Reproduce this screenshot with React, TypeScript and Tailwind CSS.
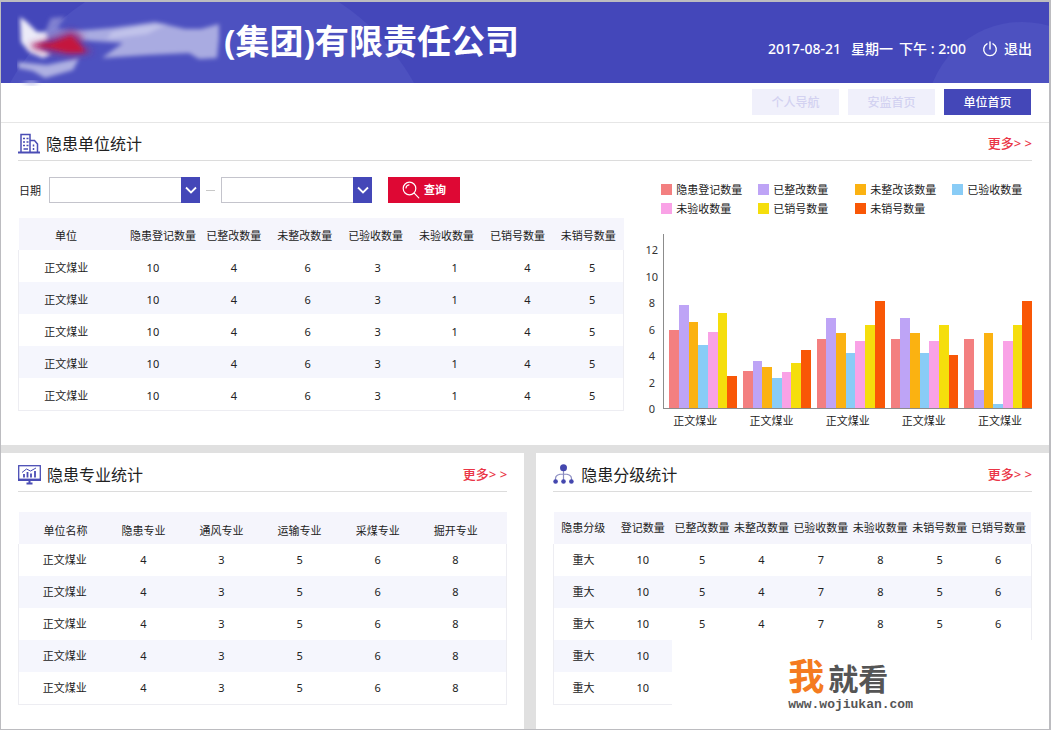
import type { ReactNode } from "react"

const series = [
    { name: "隐患登记数量", color: "bg-[#f37f80]" },
    { name: "已整改数量", color: "bg-[#bea4f6]" },
    { name: "未整改该数量", color: "bg-[#fbb211]" },
    { name: "已验收数量", color: "bg-[#89ccf6]" },
    { name: "未验收数量", color: "bg-[#f9a2e6]" },
    { name: "已销号数量", color: "bg-[#f5de0c]" },
    { name: "未销号数量", color: "bg-[#f95706]" }
]

const chartMax = 13.2

const chartGroups = [
    { name: "正文煤业", values: [5.9, 7.8, 6.5, 4.8, 5.8, 7.2, 2.4] },
    { name: "正文煤业", values: [2.8, 3.6, 3.1, 2.3, 2.7, 3.4, 4.4] },
    { name: "正文煤业", values: [5.2, 6.8, 5.7, 4.2, 5.1, 6.3, 8.1] },
    { name: "正文煤业", values: [5.2, 6.8, 5.7, 4.2, 5.1, 6.3, 4] },
    { name: "正文煤业", values: [5.2, 1.4, 5.7, 0.3, 5.1, 6.3, 8.1] }
]

type Column = { label: string; col?: string; head?: string; cell?: string }

const unitColumns: Column[] = [
    { label: "单位", col: "w-[18%]", head: "pt-1 pr-3.5", cell: "pt-1 pr-3.5" },
    { label: "隐患登记数量", head: "pt-1", cell: "pt-1 pr-5" },
    { label: "已整改数量", head: "pt-1", cell: "pt-1" },
    { label: "未整改数量", head: "pt-1", cell: "pt-1 pl-1.5" },
    { label: "已验收数量", head: "pt-1", cell: "pt-1 pl-1" },
    { label: "未验收数量", head: "pt-1", cell: "pt-1 pl-4" },
    { label: "已销号数量", head: "pt-1", cell: "pt-1 pl-5" },
    { label: "未销号数量", head: "pt-1", cell: "pt-1 pl-2" }
]

const majorColumns: Column[] = [
    { label: "单位名称", col: "w-[18%]", head: "pt-1.5 pl-1.5", cell: "pl-1" },
    { label: "隐患专业", head: "pt-1.5 pr-1", cell: "pr-1" },
    { label: "通风专业", head: "pt-1.5 pr-1", cell: "pr-1" },
    { label: "运输专业", head: "pt-1.5 pr-1", cell: "pr-1" },
    { label: "采煤专业", head: "pt-1.5 pr-1", cell: "pr-1" },
    { label: "掘开专业", col: "w-[18%]", head: "pt-1.5 pr-3.5", cell: "pr-3.5" }
]

const levelColumns: Column[] = [
    { label: "隐患分级" },
    { label: "登记数量" },
    { label: "已整改数量" },
    { label: "未整改数量" },
    { label: "已验收数量" },
    { label: "未验收数量" },
    { label: "未销号数量" },
    { label: "已销号数量", col: "w-[13%]", head: "pr-1", cell: "pr-1" }
]

const unitRows = Array.from({ length: 5 }, () => ["正文煤业", "10", "4", "6", "3", "1", "4", "5"])
const majorRows = Array.from({ length: 5 }, () => ["正文煤业", "4", "3", "5", "6", "8"])
const levelRows = [
    ["重大", "10", "5", "4", "7", "8", "5", "6"],
    ["重大", "10", "5", "4", "7", "8", "5", "6"],
    ["重大", "10", "5", "4", "7", "8", "5", "6"],
    ["重大", "10"],
    ["重大", "10"]
]

function BuildingIcon() {
    return (
        <svg viewBox="0 0 22 21" className="w-[22px] h-[21px]" fill="none" stroke="#4a4db5">
            <path d="M0 19.5h22" strokeWidth="2" />
            <path d="M3 19V1.5h9V19" strokeWidth="1.5" />
            <path d="M12 7.5h4.500l3 3.500V19" strokeWidth="1.500" />
            <path d="M5 5.500h2M8.500 5.500h2M5 9h2M8.500 9h2M5 12.500h2M8.500 12.500h2" strokeWidth="1.400" />
            <path d="M5.500 16h4.500M15.500 11.500v2M15.500 15v2" strokeWidth="1.500" />
        </svg>
    )
}

function MonitorIcon() {
    return (
        <svg viewBox="0 0 23 20" className="w-[23px] h-5" fill="none" stroke="#4a4db5">
            <rect x="0.700" y="0.700" width="21.600" height="14.600" strokeWidth="1.300" />
            <path d="M0 14.800h23" strokeWidth="2.400" />
            <path d="M6 12.500V9M9.500 12.500V7M13 12.500V8.500M17 12.500V6" strokeWidth="1.800" />
            <path d="M4 7.500L8.500 4l4 2L18 3" strokeWidth="1" />
            <path d="M11.500 15v3M8.500 18.500h6" strokeWidth="2" />
        </svg>
    )
}

function TreeIcon() {
    return (
        <svg viewBox="0 0 22 21" className="w-[22px] h-[21px]" fill="none" stroke="#8a8cc0">
            <path d="M10.500 6v11M2.500 16v-1.500c0-3 3-4.500 8-4.500s8 1.500 8 4.500V16" strokeWidth="1.200" />
            <g fill="#4447ae" stroke="none">
                <circle cx="10.500" cy="3.800" r="3.500" />
                <circle cx="2.600" cy="17.500" r="2.300" />
                <circle cx="10.500" cy="17.500" r="2.300" />
                <circle cx="18.400" cy="17.500" r="2.300" />
            </g>
        </svg>
    )
}

function BrandMark() {
    return (
        <svg viewBox="0 0 207 86" className="w-[207px] h-[86px] shrink-0" aria-hidden="true">
            <defs>
                <filter id="soft" x="-20%" y="-20%" width="140%" height="140%">
                    <feGaussianBlur stdDeviation="2" />
                </filter>
                <filter id="softer" x="-30%" y="-60%" width="160%" height="220%">
                    <feGaussianBlur stdDeviation="3.500" />
                </filter>
            </defs>
            <g filter="url(#soft)">
                <path d="M50 29C85 28 110 24 138 20L168 27 184 27 202 22 202 36 200 56 182 57 172 51 130 53 85 56 96 48 106 41 62 38Z" fill="#b4b5e4" opacity=".9" />
                <path d="M95 30L125 24 150 22 130 32 90 37Z" fill="#c8c9ee" opacity=".8" />
                <path d="M3 15L10 20 20 30 30 30 32 38 22 44 34 52 26 56 12 50 4 40Z" fill="#ecebf8" />
                <path d="M28 30L34 16 48 15 40 26 60 30 66 36 30 38Z" fill="#8f8fd6" opacity=".8" />
                <path d="M1 60L30 63 62 56 56 68 28 76 16 69 1 66Z" fill="#aeb0e2" />
            </g>
            <path d="M4 81L14 79 24 81 15 83Z" fill="#b8baea" filter="url(#soft)" />
            <path d="M12 43L36 36 54 28 66 34 64 42 76 50 56 54 36 51 18 48Z" fill="#a42a72" opacity=".8" filter="url(#softer)" />
            <path d="M14 43L36 41 54 34 60 40 68 50 50 50 34 46Z" fill="#c4153c" filter="url(#soft)" />
        </svg>
    )
}

function PanelTitle({ icon, title }: { icon: ReactNode; title: string }) {
    return (
        <div className="flex items-center justify-between h-[38px] pt-1 border-b border-[#dcdcdc]">
            <h2 className="flex items-center gap-1.5 text-base text-[#222]">
                {icon}
                {title}
            </h2>
            <a href="#" className="text-[13px] font-medium text-[#ea3546]">
                更多&gt; &gt;
            </a>
        </div>
    )
}

function DataTable({ columns, rows }: { columns: Column[]; rows: string[][] }) {
    return (
        <table className="w-full table-fixed text-center text-[11px] text-[#222]">
            <colgroup>
                {columns.map((c, i) => <col key={i} className={c.col} />)}
            </colgroup>
            <thead>
                <tr className="h-8 bg-[#f5f5fc]">
                    {columns.map((c, i) => (
                        <th key={i} scope="col" className={`font-normal whitespace-nowrap ${c.head ?? ""}`}>{c.label}</th>
                    ))}
                </tr>
            </thead>
            <tbody>
                {rows.map((row, r) => (
                    <tr key={r} className="group h-8">
                        {row.map((value, i) => (
                            <td
                                key={i}
                                className={`group-odd:bg-white group-even:bg-[#f5f6fd] group-last:border-b border-[#ededf2] first:border-l ${i === columns.length - 1 ? "border-r" : ""} ${columns[i].cell ?? ""}`}
                            >
                                {value}
                            </td>
                        ))}
                    </tr>
                ))}
            </tbody>
        </table>
    )
}

function DateSelect({ id, label }: { id: string; label: string }) {
    return (
        <div className="relative w-[151px]">
            <select id={id} aria-label={label} className="block w-full h-[26px] appearance-none border border-[#c4c4cc] bg-white px-2 text-[11px]">
                <option value=""></option>
            </select>
            <span className="pointer-events-none absolute inset-y-0 right-0 flex w-[19px] items-center justify-center bg-[#4447b8]">
                <svg viewBox="0 0 12 8" className="w-3 h-2" fill="none" stroke="#fff" strokeWidth="1.800">
                    <path d="M1 1.500l5 5 5-5" />
                </svg>
            </span>
        </div>
    )
}

function Chart() {
    return (
        <div className="pt-[19px]">
            <ul className="grid grid-cols-[97px_97px_97px_auto] pl-[17px] text-[11px] leading-[19px] text-[#222]">
                {series.map((s) => (
                    <li key={s.name} className="flex items-center gap-1 whitespace-nowrap">
                        <span className={`w-[11px] h-[11px] ${s.color}`} />
                        {s.name}
                    </li>
                ))}
            </ul>

            <div className="mt-4 flex">
                <div className="flex h-[173px] w-[19px] mt-[9px] flex-col justify-between pr-1 text-center text-[11px] leading-[14px] text-[#333]">
                    {[12, 10, 8, 6, 4, 2, 0].map((n) => <span key={n}>{n}</span>)}
                </div>
                <div className="flex-1">
                    <div className="flex h-[175px] items-end gap-1.5 border-b border-l border-[#8c8c8c] pl-[5px]">
                        {chartGroups.map((g, i) => (
                            <div key={i} className="flex h-full flex-1 items-end">
                                {g.values.map((v, k) => (
                                    <div
                                        key={k}
                                        className={`flex-1 ${series[k].color}`}
                                        style={{ height: `${(v / chartMax) * 100}%` }}
                                    />
                                ))}
                            </div>
                        ))}
                    </div>
                    <div className="flex justify-between pt-1 px-2.5 text-[11px] leading-4 text-[#222]">
                        {chartGroups.map((g, i) => <span key={i}>{g.name}</span>)}
                    </div>
                </div>
            </div>
        </div>
    )
}

export default function App() {
    return (
        <div className="flex min-h-screen flex-col border border-t-2 border-r-2 border-[#bcbcc0] bg-white font-['Noto_Sans','Noto_Sans_CJK_SC',sans-serif]">

            {/* HEADER */}
            <header className="relative flex h-[81px] items-center justify-between bg-[#4447ba] pl-4 pr-[17px] text-white">
                <div className="absolute inset-0 overflow-hidden">
                    <div className="absolute -left-5 -top-[38px] size-[462px] rounded-full bg-[#4d51c0]" />
                    <div className="absolute -right-[69px] top-5 size-48 rounded-full bg-[#4d51c0]" />
                </div>

                <div className="relative flex h-[81px] items-start">
                    <BrandMark />
                    <h1 className="text-[34px] font-bold leading-[78px] whitespace-nowrap">(集团)有限责任公司</h1>
                </div>

                <div className="relative flex items-center pt-3 text-sm font-medium whitespace-nowrap">
                    <span>2017-08-21</span>
                    <span className="ml-2.5">星期一</span>
                    <span className="ml-1.5">下午 : 2:00</span>
                    <button type="button" className="ml-4 flex items-center gap-1.5">
                        <svg viewBox="0 0 16 16" className="size-4" fill="none" stroke="#fff" strokeWidth="1.400" strokeLinecap="round">
                            <path d="M8 1v7M5 2.800a6.300 6.300 0 1 0 6 0" />
                        </svg>
                        退出
                    </button>
                </div>
            </header>

            {/* NAV */}
            <nav className="flex h-10 items-start justify-end gap-[9px] border-b border-[#e6e6e6] pt-1.5 pr-[18px] text-xs">
                <button type="button" className="h-[26px] w-[87px] bg-[#f0f0fb] pt-0.5 font-medium text-[#d3d2f1]">个人导航</button>
                <button type="button" className="h-[26px] w-[87px] bg-[#f0f0fb] pt-0.5 font-medium text-[#d3d2f1]">安监首页</button>
                <button type="button" className="h-[26px] w-[87px] bg-[#4447b8] pt-0.5 font-medium text-white">单位首页</button>
            </nav>

            {/* UNIT STATISTICS */}
            <section className="px-[17px] pb-4">
                <PanelTitle icon={<BuildingIcon />} title="隐患单位统计" />

                <div className="grid grid-cols-[61fr_39fr] gap-5">
                    <div>
                        <form className="mt-4 mb-[15px] flex items-center text-[11px]">
                            <label htmlFor="from" className="ml-px mr-2 pt-0.5 text-[#222]">日期</label>
                            <DateSelect id="from" label="开始日期" />
                            <span className="mx-1.5 h-px w-[9px] bg-[#c8c8c8]" />
                            <DateSelect id="to" label="结束日期" />
                            <button type="button" className="ml-4 flex h-[26px] w-[72px] items-center justify-center gap-1 bg-[#de0834] font-bold text-white">
                                <svg viewBox="0 0 18 18" className="size-[18px]" fill="none" stroke="#fff" strokeWidth="1.200" strokeLinecap="round">
                                    <circle cx="7.500" cy="7.500" r="6.300" />
                                    <path d="M12.200 12.200l4.600 4.600M4 7a3.500 3.500 0 0 1 3-3.200" />
                                </svg>
                                查询
                            </button>
                        </form>
                        <DataTable columns={unitColumns} rows={unitRows} />
                    </div>

                    <Chart />
                </div>
            </section>

            <div className="grid flex-1 grid-cols-[1.02fr_1fr] gap-3 border-t-8 border-[#e0e0e0] bg-[#e0e0e0]">

                {/* MAJOR STATISTICS */}
                <section className="bg-white px-[17px] pt-px pb-6">
                    <PanelTitle icon={<MonitorIcon />} title="隐患专业统计" />
                    <div className="mt-5">
                        <DataTable columns={majorColumns} rows={majorRows} />
                    </div>
                </section>

                {/* LEVEL STATISTICS */}
                <section className="relative bg-white px-[17px] pt-px pb-6">
                    <PanelTitle icon={<TreeIcon />} title="隐患分级统计" />
                    <div className="mt-5">
                        <DataTable columns={levelColumns} rows={levelRows} />
                    </div>

                    <div className="absolute bottom-4 right-[136px] font-bold text-[#555]">
                        <div className="flex items-end gap-1">
                            <span className="text-4xl leading-10 text-[#f47b20]">我</span>
                            <span className="text-3xl leading-9">就看</span>
                        </div>
                        <div className="font-['Liberation_Mono',monospace] text-[13px] leading-4">www.wojiukan.com</div>
                    </div>
                </section>
            </div>

        </div>
    )
}
